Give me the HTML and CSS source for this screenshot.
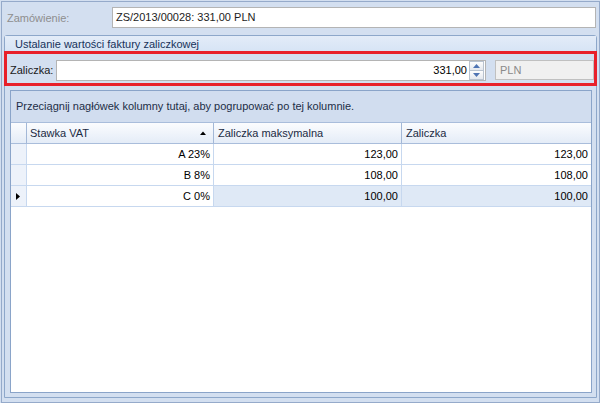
FILE: index.html
```html
<!DOCTYPE html>
<html lang="pl">
<head>
<meta charset="utf-8">
<title>Zaliczka</title>
<link rel="stylesheet" href="styles.css">
</head>
<body>
<div class="window">
  <div class="order-row">
    <span class="order-label">Zamówienie:</span>
    <div class="field order-field">ZS/2013/00028: 331,00 PLN</div>
  </div>
  <div class="group">
    <div class="group-title">Ustalanie wartości faktury zaliczkowej</div>
    <div class="highlight">
      <span class="amount-label">Zaliczka:</span>
      <div class="field amount-field">
        <span class="amount-value">331,00</span>
        <div class="spin">
          <div class="spin-btn"><svg width="7" height="4" viewBox="0 0 7 4"><polygon points="0,4 3.5,0 7,4" fill="#4f74b3"/></svg></div>
          <div class="spin-btn"><svg width="7" height="4" viewBox="0 0 7 4"><polygon points="0,0 3.5,4 7,0" fill="#4f74b3"/></svg></div>
        </div>
      </div>
      <div class="field currency-field">PLN</div>
    </div>
    <div class="grid">
      <div class="group-panel">Przeciągnij nagłówek kolumny tutaj, aby pogrupować po tej kolumnie.</div>
      <div class="row header">
        <div class="cell ind"></div>
        <div class="cell hcell sort">Stawka VAT<svg class="sort-arrow" width="6" height="4" viewBox="0 0 6 4"><polygon points="0,4 3,0.5 6,4" fill="#000"/></svg></div>
        <div class="cell hcell">Zaliczka maksymalna</div>
        <div class="cell hcell last">Zaliczka</div>
      </div>
      <div class="row">
        <div class="cell ind"></div>
        <div class="cell num">A 23%</div>
        <div class="cell num">123,00</div>
        <div class="cell num last">123,00</div>
      </div>
      <div class="row">
        <div class="cell ind"></div>
        <div class="cell num">B 8%</div>
        <div class="cell num">108,00</div>
        <div class="cell num last">108,00</div>
      </div>
      <div class="row selected">
        <div class="cell ind"><svg width="4" height="7" viewBox="0 0 4 7"><polygon points="0,0 4,3.5 0,7" fill="#000"/></svg></div>
        <div class="cell num focus">C 0%</div>
        <div class="cell num">100,00</div>
        <div class="cell num last">100,00</div>
      </div>
    </div>
  </div>
</div>
</body>
</html>
```

FILE: styles.css
```css
* { box-sizing: border-box; }
html, body { margin: 0; padding: 0; }
body {
  width: 600px;
  height: 403px;
  overflow: hidden;
  background: #d3dff0;
  font-family: "Liberation Sans", Arial, sans-serif;
  font-size: 11px;
  color: #000;
}
.window {
  margin: 1px 0 0 1px;
  width: 599px;
  height: 402px;
  border: 1px solid #95aaca;
  padding: 0 2px;
  display: flex;
  flex-direction: column;
}
.order-row {
  display: flex;
  align-items: center;
  height: 21px;
  margin: 5px 1px 0 0;
  padding-left: 3px;
}
.order-label {
  width: 105px;
  color: #8e8e8e;
}
.field {
  background: #fff;
  border: 1px solid #b4b4b4;
}
.order-field {
  flex: 1;
  height: 21px;
  line-height: 19px;
  padding-left: 3px;
  color: #1c1c1c;
}
.group {
  flex: 1;
  margin: 7px 0 4px;
  border: 1px solid #8da7ca;
  border-radius: 3px 3px 0 0;
  display: flex;
  flex-direction: column;
}
.group-title {
  height: 15px;
  padding: 1px 0 0 10px;
  line-height: 14px;
  background: linear-gradient(#e3ecf8, #d7e4f5);
  color: #17325a;
}
.highlight {
  margin: 0 -1px;
  height: 35px;
  border: 3px solid #e8202a;
  padding: 6px 0 0 3px;
  display: flex;
  align-items: flex-start;
}
.amount-label {
  width: 46px;
  height: 21px;
  line-height: 21px;
  color: #1a1a1a;
}
.amount-field {
  flex: 1;
  height: 21px;
  display: flex;
  align-items: center;
  justify-content: flex-end;
  padding-right: 1px;
}
.amount-value {
  line-height: 19px;
  margin-right: 2px;
}
.spin {
  width: 15px;
  height: 19px;
  display: flex;
  flex-direction: column;
}
.spin-btn {
  flex: 1;
  display: flex;
  align-items: center;
  justify-content: center;
  border: 1px solid #b9c3d0;
  background: linear-gradient(#fdfdfd, #e4e8ee);
}
.spin-btn + .spin-btn { border-top: none; }
.currency-field {
  width: 99px;
  height: 20px;
  margin-left: 9px;
  padding-left: 4px;
  line-height: 18px;
  background: #f0f0f0;
  border-color: #c0c0c0;
  color: #8a8a8a;
}
.grid {
  flex: 1;
  margin: 4px 4px 4px 5px;
  border: 1px solid #8aa4c9;
  background: #fff;
  display: flex;
  flex-direction: column;
}
.group-panel {
  height: 32px;
  padding-left: 5px;
  line-height: 31px;
  border-bottom: 1px solid #a9bddb;
  background: #d1ddef;
  color: #1d2d46;
}
.row {
  display: grid;
  grid-template-columns: 16px 187px 188px 1fr;
  height: 21px;
}
.cell {
  height: 21px;
  border-right: 1px solid #c7d8ef;
  border-bottom: 1px solid #c7d8ef;
  line-height: 20px;
  white-space: nowrap;
  overflow: hidden;
}
.cell.last { border-right: none; }
.cell.ind {
  background: #edf2fa;
  display: flex;
  align-items: center;
  justify-content: center;
  padding-right: 1px;
}
.header .cell {
  background: linear-gradient(#fbfcfe, #e4ecf7);
  border-right-color: #a3b8d7;
  border-bottom-color: #a9bddb;
  color: #1b2b43;
}
.hcell { padding-left: 3px; }
.header .cell + .cell + .cell { padding-left: 4px; }
.sort {
  display: flex;
  align-items: center;
  justify-content: space-between;
  padding-right: 7px;
}
.num {
  text-align: right;
  padding-right: 3px;
}
.selected .cell { background: #dfe9f6; }
.selected .cell.ind { background: #edf2fa; }
.selected .cell.focus { background: #fff; }
```
